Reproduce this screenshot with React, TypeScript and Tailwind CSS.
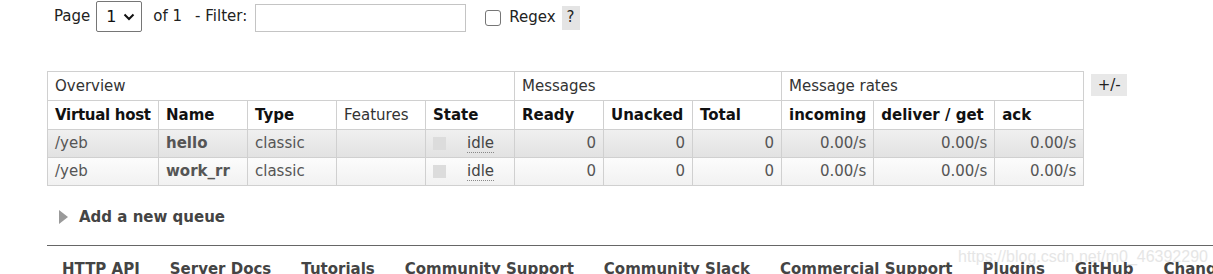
import React from "react";

const font = "font-['DejaVu_Sans','Verdana',sans-serif]";

type Row = { vhost: string; name: string; cls: string };
const rows: Row[] = [
  { vhost: "/yeb", name: "hello", cls: "bg-[linear-gradient(#f0f0f0,#e2e2e2)]" },
  { vhost: "/yeb", name: "work_rr", cls: "bg-[linear-gradient(#fcfcfc,#f1f1f1)]" },
];

const footer = [
  "HTTP API",
  "Server Docs",
  "Tutorials",
  "Community Support",
  "Community Slack",
  "Commercial Support",
  "Plugins",
  "GitHub",
  "Changelog",
];

export default function App() {
  const td = "border border-[#d0d0d0] px-[7px] h-[28px] align-middle text-[#555] whitespace-nowrap";
  const th = "border border-[#d0d0d0] px-[7px] h-[29px] text-left align-middle font-bold text-[#111] whitespace-nowrap";
  const num = td + " text-right";
  return (
    <div className={`${font} relative w-[1213px] h-[274px] overflow-hidden bg-white text-[15px] text-[#333]`}>
      {/* top controls */}
      <div className="flex items-center h-[32px] pl-[54px]">
        <span className="text-[#222]">Page</span>
        <div className="ml-[6px] flex items-center justify-between w-[46px] h-[31px] mt-[1px] border border-[#767676] rounded-[2px] pl-[9px] pr-[6px]">
          <span className="text-[#111] text-[16px]">1</span>
          <svg width="12" height="8" viewBox="0 0 12 8">
            <path d="M1.5 1.5 L6 6 L10.5 1.5" stroke="#111" strokeWidth="2" fill="none" />
          </svg>
        </div>
        <span className="ml-[11px] text-[#222]">of 1</span>
        <span className="ml-[13px] text-[#222]">- Filter:</span>
        <div className="ml-[8px] w-[211px] h-[28px] mt-[3px] border border-[#c4c4c4]" />
        <div className="ml-[19px] mt-[4px] w-[16px] h-[16px] border border-[#767676] rounded-[3px]" />
        <span className="ml-[8px] mt-[3px] text-[#222]">Regex</span>
        <span className="ml-[6px] mt-[3px] w-[18px] h-[24px] bg-[#e4e4e4] flex items-center justify-center text-[#222]">?</span>
      </div>

      {/* table */}
      <div className="flex items-start mt-[39px] pl-[47px]">
        <table className="border-collapse">
          <thead>
            <tr>
              <th colSpan={5} className="border border-[#d0d0d0] px-[7px] h-[29px] text-left font-normal text-[#333]">Overview</th>
              <th colSpan={3} className="border border-[#d0d0d0] px-[7px] h-[29px] text-left font-normal text-[#333]">Messages</th>
              <th colSpan={3} className="border border-[#d0d0d0] px-[7px] h-[29px] text-left font-normal text-[#333]">Message rates</th>
            </tr>
            <tr>
              <th className={th + " w-[111px] tracking-[-0.3px]"}>Virtual host</th>
              <th className={th + " w-[89px]"}>Name</th>
              <th className={th + " w-[89px]"}>Type</th>
              <th className={"border border-[#d0d0d0] px-[7px] h-[29px] text-left font-normal text-[#333] w-[89px]"}>Features</th>
              <th className={th + " w-[89px]"}>State</th>
              <th className={th + " w-[89px]"}>Ready</th>
              <th className={th + " w-[89px]"}>Unacked</th>
              <th className={th + " w-[89px]"}>Total</th>
              <th className={th + " w-[91px]"}>incoming</th>
              <th className={th + " w-[121px]"}>deliver / get</th>
              <th className={th + " w-[89px]"}>ack</th>
            </tr>
          </thead>
          <tbody>
            {rows.map((r) => (
              <tr key={r.name} className={r.cls}>
                <td className={td}>{r.vhost}</td>
                <td className={td + " font-bold text-[#111]"}>{r.name}</td>
                <td className={td}>classic</td>
                <td className={td}></td>
                <td className={td}>
                  <div className="flex items-center">
                    <span className="w-[13px] h-[13px] bg-[#dcdcdc]" />
                    <span className="ml-[21px] text-[#444] border-b border-dotted border-[#888] leading-[17px]">idle</span>
                  </div>
                </td>
                <td className={num}>0</td>
                <td className={num}>0</td>
                <td className={num}>0</td>
                <td className={num}>0.00/s</td>
                <td className={num}>0.00/s</td>
                <td className={num}>0.00/s</td>
              </tr>
            ))}
          </tbody>
        </table>
        <span className="ml-[7px] mt-[3px] w-[36px] h-[22px] bg-[#e8e8e8] flex items-center justify-center text-[#222]">+/-</span>
      </div>

      {/* add a new queue */}
      <div className="flex items-center mt-[21px] pl-[59px] h-[20px]">
        <svg width="9" height="14" viewBox="0 0 9 14">
          <path d="M0 0 L9 7 L0 14 Z" fill="#9a9a9a" />
        </svg>
        <span className="ml-[11px] font-bold text-[#444]">Add a new queue</span>
      </div>

      {/* footer */}
      <div className="ml-[47px] mt-[18px] border-t border-[#666]">
        <div className="flex gap-[30px] pl-[15px] pt-[12px] whitespace-nowrap">
          {footer.map((f) => (
            <span key={f} className="font-bold text-[#444]">{f}</span>
          ))}
        </div>
      </div>

      {/* watermark */}
      <div className="absolute left-[958px] top-[245px] text-[16px] text-[#e6e6e6] font-['Liberation_Sans',sans-serif] whitespace-nowrap">
        https://blog.csdn.net/m0_46392290
      </div>
    </div>
  );
}
